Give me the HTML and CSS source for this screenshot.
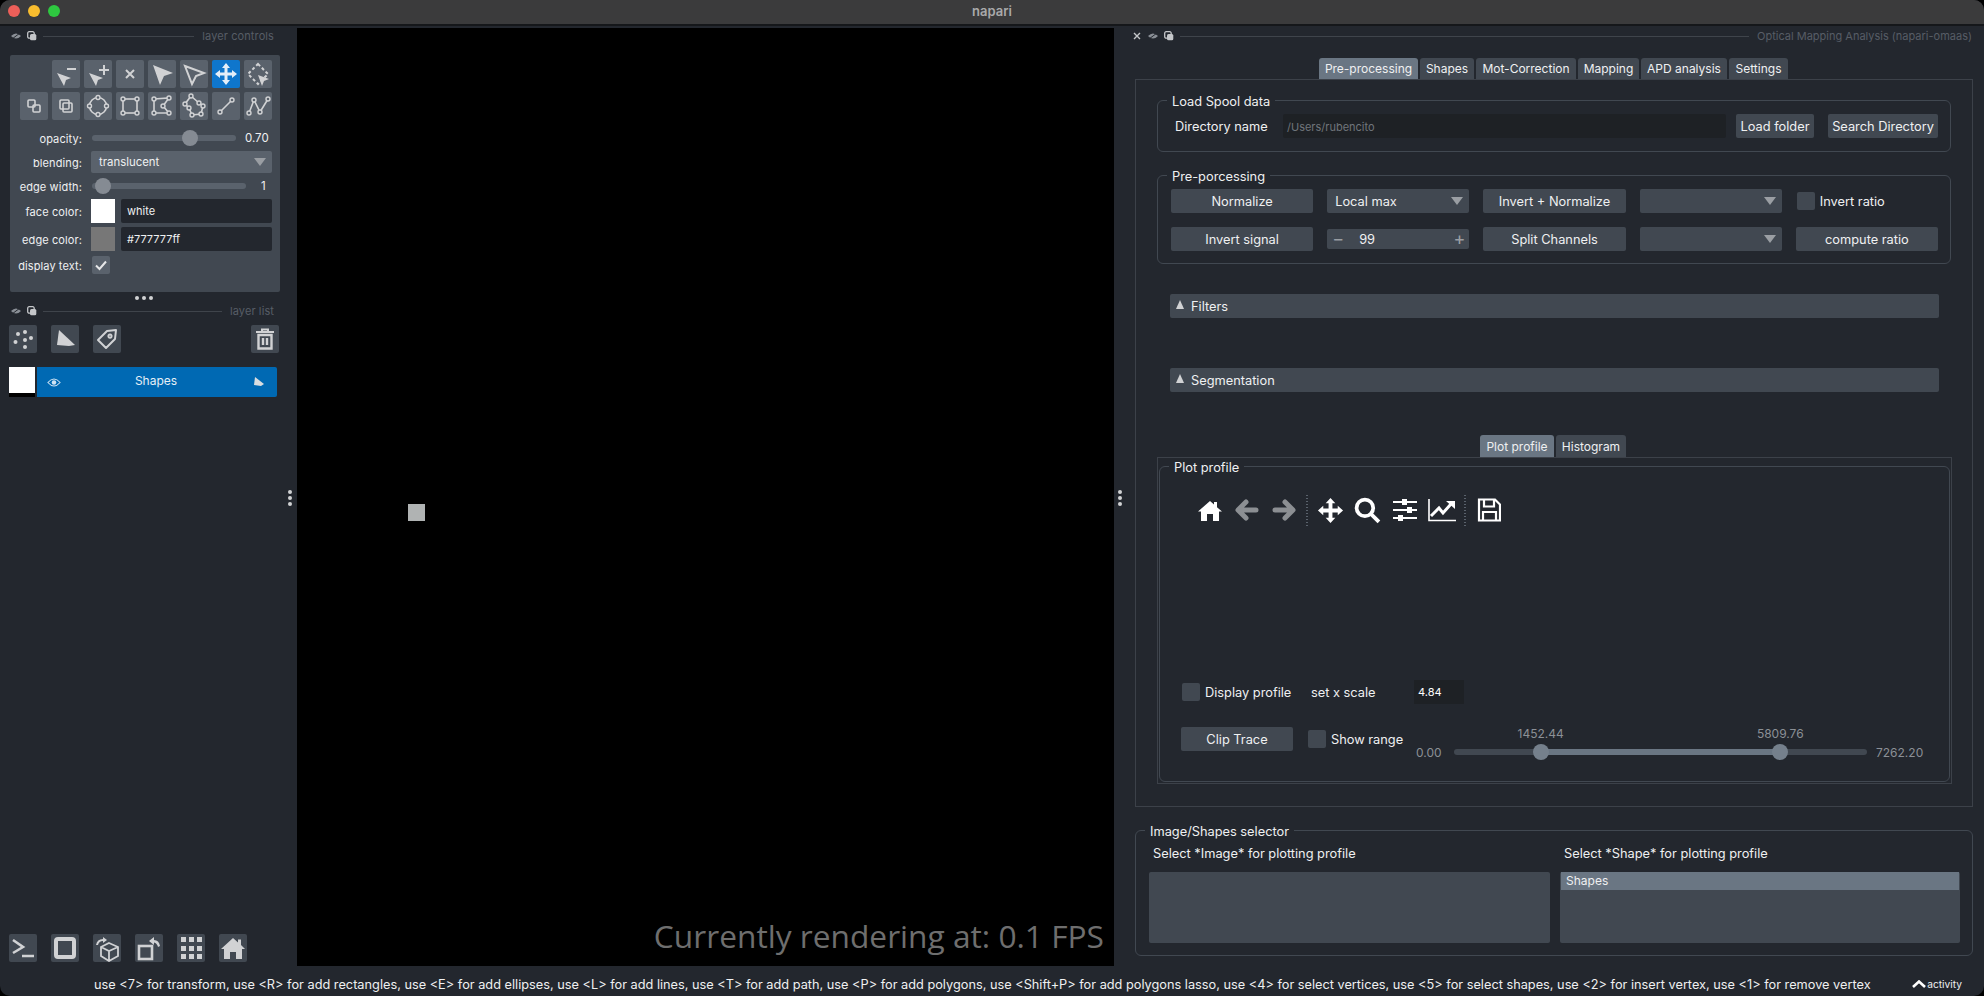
FILE: index.html
```html
<!DOCTYPE html>
<html>

<head>
    <meta charset="utf-8">
    <title>napari</title>
    <link rel="stylesheet" href="styles.css">
</head>

<body>
    <div class="window">
        <header class="titlebar">
            <div class="lights">
                <span class="light red"></span>
                <span class="light yellow"></span>
                <span class="light green"></span>
            </div>
            <span class="app-name">napari</span>
        </header>

        <main class="main">
            <!-- left dock -->
            <section class="left-dock">
                <div class="dock-title">
                    <svg class="dock-ico" viewBox="0 0 10 10"><path d="M0 5 Q5 0 10 5 Q5 10 0 5Z" fill="#8a8f96"/><path d="M1 8 L9 2" stroke="#23272e" stroke-width="1"/></svg>
                    <svg class="dock-ico float" viewBox="0 0 10 10"><rect x="0.7" y="0.7" width="6.5" height="6.5" rx="1.5" fill="none" stroke="#c4c6c9" stroke-width="1.3"/><rect x="3" y="3" width="6.3" height="6.3" rx="1.5" fill="#c4c6c9"/></svg>
                    <span class="dock-line"></span>
                    <span class="dock-label">layer controls</span>
                </div>

                <div class="controls">
                    <div class="mode-grid">
                        <button class="mode-btn start-2"><svg viewBox="0 0 28 28"><path d="M5 13 L19 18 L14 20 L12 26Z" class="ifill"/><path d="M15 9H24" class="istroke"/></svg></button>
                        <button class="mode-btn"><svg viewBox="0 0 28 28"><path d="M5 13 L19 18 L14 20 L12 26Z" class="ifill"/><path d="M15 10H25M20 5V15" class="istroke"/></svg></button>
                        <button class="mode-btn"><svg viewBox="0 0 28 28"><path d="M10 10L18 18M18 10L10 18" class="istroke"/></svg></button>
                        <button class="mode-btn"><svg viewBox="0 0 28 28"><path d="M5 5 L25 13 L16 16 L12 25Z" class="ifill"/></svg></button>
                        <button class="mode-btn"><svg viewBox="0 0 28 28"><path d="M5 6 L24 13 L16 16 L12 24Z" class="ioutline"/></svg></button>
                        <button class="mode-btn active"><svg viewBox="0 0 28 28"><path d="M14 3 L18 8 H15.5 V12.5 H20 V10 L25 14 L20 18 V15.5 H15.5 V20 H18 L14 25 L10 20 H12.5 V15.5 H8 V18 L3 14 L8 10 V12.5 H12.5 V8 H10Z" fill="#e4eef8"/></svg></button>
                        <button class="mode-btn"><svg viewBox="0 0 28 28"><path d="M14 4 L24 14 L14 24 L4 14Z" class="idash"/><path d="M14 15 L25 19 L20 21 L18 26Z" class="ifill"/></svg></button>

                        <button class="mode-btn"><svg viewBox="0 0 28 28"><rect x="8" y="8" width="7" height="7" rx="1" class="ithin"/><rect x="13" y="13" width="7" height="7" rx="1" class="ithin"/></svg></button>
                        <button class="mode-btn"><svg viewBox="0 0 28 28"><rect x="8" y="8" width="9" height="9" rx="1" class="ithin"/><rect x="11" y="11" width="9" height="9" rx="1" class="ithin"/></svg></button>
                        <button class="mode-btn"><svg viewBox="0 0 28 28"><circle cx="14" cy="14" r="8.5" class="ithin"/><circle cx="14" cy="5.5" r="2" class="ihandle"/><circle cx="14" cy="22.5" r="2" class="ihandle"/><circle cx="5.5" cy="14" r="2" class="ihandle"/><circle cx="22.5" cy="14" r="2" class="ihandle"/></svg></button>
                        <button class="mode-btn"><svg viewBox="0 0 28 28"><rect x="7" y="7" width="14" height="14" class="ithin"/><circle cx="7" cy="7" r="2" class="ihandle"/><circle cx="21" cy="7" r="2" class="ihandle"/><circle cx="7" cy="21" r="2" class="ihandle"/><circle cx="21" cy="21" r="2" class="ihandle"/></svg></button>
                        <button class="mode-btn"><svg viewBox="0 0 28 28"><path d="M6 7 L21 6 L15 14 L21 21 L6 21Z" class="ithin"/><circle cx="6" cy="7" r="2" class="ihandle"/><circle cx="21" cy="6" r="2" class="ihandle"/><circle cx="15" cy="14" r="2" class="ihandle"/><circle cx="21" cy="21" r="2" class="ihandle"/><circle cx="6" cy="21" r="2" class="ihandle"/></svg></button>
                        <button class="mode-btn"><svg viewBox="0 0 28 28"><path d="M11 4 L19 11 L23 14 L21 22 L12 23 L9 16 L5 12Z" class="ithin"/><circle cx="11" cy="4" r="2" class="ihandle"/><circle cx="19" cy="11" r="2" class="ihandle"/><circle cx="23" cy="14" r="2" class="ihandle"/><circle cx="21" cy="22" r="2" class="ihandle"/><circle cx="12" cy="23" r="2" class="ihandle"/><circle cx="9" cy="16" r="2" class="ihandle"/><circle cx="5" cy="12" r="2" class="ihandle"/></svg></button>
                        <button class="mode-btn"><svg viewBox="0 0 28 28"><path d="M8 20 L20 8" class="ithin"/><circle cx="8" cy="20" r="2" class="ihandle"/><circle cx="20" cy="8" r="2" class="ihandle"/></svg></button>
                        <button class="mode-btn"><svg viewBox="0 0 28 28"><path d="M5 21 L10 8 L16 20 L24 7" class="ithin"/><circle cx="5" cy="21" r="2" class="ihandle"/><circle cx="10" cy="8" r="2" class="ihandle"/><circle cx="16" cy="20" r="2" class="ihandle"/><circle cx="24" cy="7" r="2" class="ihandle"/></svg></button>
                    </div>

                    <div class="prop-rows">
                        <div class="prop-row">
                            <label class="prop-label">opacity:</label>
                            <div class="prop-slider">
                                <div class="track track-opacity"><span class="thumb" style="left: 68%"></span></div>
                                <span class="slider-value">0.70</span>
                            </div>
                        </div>
                        <div class="prop-row">
                            <label class="prop-label">blending:</label>
                            <div class="combo combo-sm">translucent<span class="caret"></span></div>
                        </div>
                        <div class="prop-row">
                            <label class="prop-label">edge width:</label>
                            <div class="prop-slider">
                                <div class="track track-edge"><span class="thumb" style="left: 7%"></span></div>
                                <span class="slider-value value-narrow">1</span>
                            </div>
                        </div>
                        <div class="prop-row tall">
                            <label class="prop-label">face color:</label>
                            <div class="color-field">
                                <span class="swatch white"></span>
                                <span class="color-input">white</span>
                            </div>
                        </div>
                        <div class="prop-row tall gap-4">
                            <label class="prop-label">edge color:</label>
                            <div class="color-field">
                                <span class="swatch grey"></span>
                                <span class="color-input">#777777ff</span>
                            </div>
                        </div>
                        <div class="prop-row check-row">
                            <label class="prop-label">display text:</label>
                            <span class="check checked"><svg viewBox="0 0 18 18"><path d="M4 9.5 L7.5 13 L14 5.5" fill="none" stroke="#e6e7e8" stroke-width="2"/></svg></span>
                        </div>
                    </div>
                </div>

                <div class="h-handle"><span></span><span></span><span></span></div>

                <div class="dock-title list-title">
                    <svg class="dock-ico" viewBox="0 0 10 10"><path d="M0 5 Q5 0 10 5 Q5 10 0 5Z" fill="#8a8f96"/><path d="M1 8 L9 2" stroke="#23272e" stroke-width="1"/></svg>
                    <svg class="dock-ico float" viewBox="0 0 10 10"><rect x="0.7" y="0.7" width="6.5" height="6.5" rx="1.5" fill="none" stroke="#c4c6c9" stroke-width="1.3"/><rect x="3" y="3" width="6.3" height="6.3" rx="1.5" fill="#c4c6c9"/></svg>
                    <span class="dock-line"></span>
                    <span class="dock-label">layer list</span>
                </div>

                <div class="layer-btns">
                    <button class="mode-btn"><svg viewBox="0 0 28 28"><g fill="#d1d2d4"><circle cx="6.5" cy="17" r="2"/><circle cx="9" cy="9" r="2"/><circle cx="16" cy="7" r="2"/><circle cx="16" cy="15" r="2"/><circle cx="22" cy="13" r="2"/><circle cx="16" cy="22" r="2"/></g></svg></button>
                    <button class="mode-btn"><svg viewBox="0 0 28 28"><path d="M8 5 L24 20 L18 21 L6 20Z" fill="#d1d2d4"/></svg></button>
                    <button class="mode-btn"><svg viewBox="0 0 28 28"><path d="M5 15 L14 6 L23 5 L22 14 L13 23Z M17 9.5 a1.6 1.6 0 1 0 0.01 0Z" fill="none" stroke="#d1d2d4" stroke-width="2" stroke-linejoin="round"/></svg></button>
                    <button class="mode-btn push"><svg viewBox="0 0 28 28"><path d="M5 7H23M11 7V4.5H17V7" fill="none" stroke="#d1d2d4" stroke-width="2"/><path d="M7.5 10H20.5V23.5H7.5Z" fill="none" stroke="#d1d2d4" stroke-width="2.4"/><path d="M12 13V20M16 13V20" stroke="#d1d2d4" stroke-width="2.4"/></svg></button>
                </div>

                <div class="layer-row">
                    <span class="layer-thumb"></span>
                    <div class="layer-item">
                        <svg class="layer-eye" viewBox="0 0 16 12"><path d="M1 6 Q8 -2 15 6 Q8 14 1 6Z" fill="none" stroke="#cfe3f3" stroke-width="1.2"/><circle cx="8" cy="6" r="2.6" fill="#cfe3f3"/></svg>
                        <span class="layer-name">Shapes</span>
                        <svg class="layer-type" viewBox="0 0 12 12"><path d="M2 1 L11 8 L8 10 L1 9Z" fill="#d9dde0"/></svg>
                    </div>
                </div>

                <div class="viewer-btns">
                    <button class="mode-btn"><svg viewBox="0 0 28 28"><path d="M4 6 L14 13 L4 19" fill="none" stroke="#d1d2d4" stroke-width="2.6"/><path d="M13 22H25" stroke="#d1d2d4" stroke-width="2.6"/></svg></button>
                    <button class="mode-btn"><svg viewBox="0 0 28 28"><rect x="5" y="5" width="18" height="18" rx="2" fill="none" stroke="#d1d2d4" stroke-width="4"/></svg></button>
                    <button class="mode-btn"><svg viewBox="0 0 28 28"><path d="M16 9 L25 13 L25 22 L16 27 L8 22 L8 13Z M8 13 L16 17 L25 13 M16 17V27" fill="none" stroke="#d1d2d4" stroke-width="1.8"/><path d="M3 11 Q4 5 10 5 V3 L14 6 L10 9 V7 Q6 7 5 11Z" fill="#d1d2d4"/></svg></button>
                    <button class="mode-btn"><svg viewBox="0 0 28 28"><rect x="4" y="12" width="13" height="13" fill="none" stroke="#d1d2d4" stroke-width="2.6"/><path d="M25 12 Q24 6 19 6 V3 L14 7 L19 11 V8.5 Q22 9 23 13Z" fill="#d1d2d4"/></svg></button>
                    <button class="mode-btn"><svg viewBox="0 0 28 28"><g fill="#d1d2d4"><rect x="4" y="3" width="5" height="5"/><rect x="12" y="3" width="5" height="5"/><rect x="20" y="3" width="5" height="5"/><rect x="4" y="12" width="5" height="5"/><rect x="12" y="12" width="5" height="5"/><rect x="20" y="12" width="5" height="5"/><rect x="4" y="20" width="5" height="5"/><rect x="12" y="20" width="5" height="5"/><rect x="20" y="20" width="5" height="5"/></g></svg></button>
                    <button class="mode-btn"><svg viewBox="0 0 28 28"><path d="M14 4 L19 8.5 V5.5 H22 V11 L26 15 H23 V25 H17 V18 H11 V25 H5 V15 H2Z" fill="#d1d2d4"/></svg></button>
                </div>

                <div class="v-handle left-handle"><span></span><span></span><span></span></div>
            </section>

            <!-- canvas -->
            <section class="canvas">
                <span class="canvas-shape"></span>
                <span class="fps">Currently rendering at: 0.1 FPS</span>
            </section>

            <!-- plugin dock -->
            <section class="right-dock">
                <div class="v-handle right-handle"><span></span><span></span><span></span></div>

                <div class="dock-title plugin-title">
                    <svg class="dock-ico close" viewBox="0 0 10 10"><path d="M2 2L8 8M8 2L2 8" stroke="#c4c6c9" stroke-width="1.4"/></svg>
                    <svg class="dock-ico" viewBox="0 0 10 10"><path d="M0 5 Q5 0 10 5 Q5 10 0 5Z" fill="#8a8f96"/><path d="M1 8 L9 2" stroke="#23272e" stroke-width="1"/></svg>
                    <svg class="dock-ico float" viewBox="0 0 10 10"><rect x="0.7" y="0.7" width="6.5" height="6.5" rx="1.5" fill="none" stroke="#c4c6c9" stroke-width="1.3"/><rect x="3" y="3" width="6.3" height="6.3" rx="1.5" fill="#c4c6c9"/></svg>
                    <span class="dock-line"></span>
                    <span class="dock-label plugin-label">Optical Mapping Analysis (napari-omaas)</span>
                </div>

                <nav class="tabs main-tabs">
                    <a class="tab selected t-pre">Pre-processing</a>
                    <a class="tab t-shapes">Shapes</a>
                    <a class="tab t-mot">Mot-Correction</a>
                    <a class="tab t-map">Mapping</a>
                    <a class="tab t-apd">APD analysis</a>
                    <a class="tab t-set">Settings</a>
                </nav>

                <div class="pane">
                    <div class="group spool">
                        <span class="group-title">Load Spool data</span>
                        <label class="dir-label">Directory name</label>
                        <span class="dir-input">/Users/rubencito</span>
                        <button class="btn load">Load folder</button>
                        <button class="btn search">Search Directory</button>
                    </div>

                    <div class="group prep">
                        <span class="group-title">Pre-porcessing</span>
                        <button class="btn">Normalize</button>
                        <div class="combo">Local max<span class="caret"></span></div>
                        <button class="btn">Invert + Normalize</button>
                        <div class="combo"><span class="caret"></span></div>
                        <div class="check-item invert"><span class="check"></span><span>Invert ratio</span></div>
                        <button class="btn">Invert signal</button>
                        <div class="spin"><span class="spin-sign">−</span><span class="spin-value">99</span><span class="spin-sign plus">+</span></div>
                        <button class="btn">Split Channels</button>
                        <div class="combo"><span class="caret"></span></div>
                        <button class="btn">compute ratio</button>
                    </div>

                    <div class="collapse filters"><span class="arrow"></span>Filters</div>
                    <div class="collapse segmentation"><span class="arrow"></span>Segmentation</div>

                    <nav class="tabs plot-tabs">
                        <a class="tab selected t-plot">Plot profile</a>
                        <a class="tab t-hist">Histogram</a>
                    </nav>

                    <div class="plot-pane">
                        <div class="group plot-group">
                            <span class="group-title">Plot profile</span>

                            <div class="toolbar">
                                <span class="tool"><svg viewBox="0 0 24 24"><path d="M12 3 L16 6.5 V4 H19 V9.3 L24 13.5 H21 V23 H15 V16 H9 V23 H3 V13.5 H0Z" fill="#fff"/></svg></span>
                                <span class="tool"><svg viewBox="0 0 24 24"><path d="M11 4 L3 12 L11 20 M4 12 H21" fill="none" stroke="#8c8f93" stroke-width="5" stroke-linecap="round" stroke-linejoin="round"/></svg></span>
                                <span class="tool"><svg viewBox="0 0 24 24"><path d="M13 4 L21 12 L13 20 M20 12 H3" fill="none" stroke="#8c8f93" stroke-width="5" stroke-linecap="round" stroke-linejoin="round"/></svg></span>
                                <span class="tool-sep"></span>
                                <span class="tool large"><svg viewBox="0 0 28 28"><path d="M14 1 L19 6.5 H16 V12 H21.5 V9 L27 14 L21.5 19 V16 H16 V21.5 H19 L14 27 L9 21.5 H12 V16 H6.5 V19 L1 14 L6.5 9 V12 H12 V6.5 H9Z" fill="#fff"/></svg></span>
                                <span class="tool large"><svg viewBox="0 0 26 26"><circle cx="10.5" cy="10.5" r="8" fill="none" stroke="#fff" stroke-width="3.6"/><path d="M16.5 16.5 L24 24" stroke="#fff" stroke-width="3.6"/></svg></span>
                                <span class="tool"><svg viewBox="0 0 24 24"><g stroke="#fff" stroke-width="2"><path d="M0 4H24M0 12H24M0 20H24"/></g><g fill="#fff"><rect x="9" y="1" width="5" height="6"/><rect x="14" y="9" width="5" height="6"/><rect x="5" y="17" width="5" height="6"/></g></svg></span>
                                <span class="tool wide"><svg viewBox="0 0 28 24"><path d="M1 1V22.5H28" fill="none" stroke="#fff" stroke-width="1.6"/><path d="M3 18 L11 10 L15 15 L23 6" fill="none" stroke="#fff" stroke-width="3"/><path d="M18 3 H27 V11Z" fill="#fff"/></svg></span>
                                <span class="tool-sep"></span>
                                <span class="tool"><svg viewBox="0 0 24 24"><path d="M2 1.5 H18 L23 6.5 V22.5 H2Z" fill="none" stroke="#fff" stroke-width="2.2"/><path d="M7 2 V8.5 H17 V2" fill="none" stroke="#fff" stroke-width="2.2"/><path d="M6 22 V14 H19 V22" fill="none" stroke="#fff" stroke-width="2.2"/></svg></span>
                            </div>

                            <div class="plot-area"></div>

                            <div class="plot-row">
                                <span class="check"></span>
                                <span class="plot-text display-label">Display profile</span>
                                <span class="plot-text scale-label">set x scale</span>
                                <span class="scale-input">4.84</span>
                            </div>

                            <div class="plot-row clip-row">
                                <button class="btn clip">Clip Trace</button>
                                <span class="check"></span>
                                <span class="plot-text range-label">Show range</span>
                                <div class="range">
                                    <span class="range-end">0.00</span>
                                    <div class="range-track">
                                        <span class="range-fill" style="left: 21%; width: 58%"></span>
                                        <span class="thumb" style="left: 21%"><em>1452.44</em></span>
                                        <span class="thumb" style="left: 79%"><em>5809.76</em></span>
                                    </div>
                                    <span class="range-end">7262.20</span>
                                </div>
                            </div>
                        </div>
                    </div>
                </div>

                <div class="group selector">
                    <span class="group-title">Image/Shapes selector</span>
                    <div class="selector-col">
                        <label class="selector-label">Select *Image* for plotting profile</label>
                        <div class="list"></div>
                    </div>
                    <div class="selector-col">
                        <label class="selector-label">Select *Shape* for plotting profile</label>
                        <div class="list"><div class="list-item">Shapes</div></div>
                    </div>
                </div>
            </section>
        </main>

        <footer class="statusbar">
            <span class="status-text">use &lt;7&gt; for transform, use &lt;R&gt; for add rectangles, use &lt;E&gt; for add ellipses, use &lt;L&gt; for add lines, use &lt;T&gt; for add path, use &lt;P&gt; for add polygons, use &lt;Shift+P&gt; for add polygons lasso, use &lt;4&gt; for select vertices, use &lt;5&gt; for select shapes, use &lt;2&gt; for insert vertex, use &lt;1&gt; for remove vertex</span>
            <span class="activity"><svg viewBox="0 0 14 8"><path d="M1 7 L7 1.5 L13 7" fill="none" stroke="#fff" stroke-width="2.6"/></svg>activity</span>
        </footer>
    </div>
</body>

</html>
```

FILE: styles.css
```css
* {
    box-sizing: border-box;
}

html,
body {
    margin: 0;
    height: 100%;
    background: #000;
}

body {
    font-family: Inter, "Liberation Sans", sans-serif;
    font-size: 12.8px;
    color: #eff0f1;
    overflow: hidden;
}

button {
    font: inherit;
    color: inherit;
    border: none;
    padding: 0;
}

.window {
    width: 1984px;
    height: 996px;
    display: flex;
    flex-direction: column;
    background: #23272e;
    border-radius: 10px;
    overflow: hidden;
}

/* title bar */
.titlebar {
    position: relative;
    height: 26px;
    flex: none;
    background: #3b3b3c;
    border-bottom: 2px solid #15171a;
    display: flex;
    align-items: center;
    justify-content: center;
}

.lights {
    position: absolute;
    left: 8px;
    top: 5px;
    display: flex;
    gap: 8px;
}

.light {
    width: 12px;
    height: 12px;
    border-radius: 50%;
}

.red { background: #ed5f59; }
.yellow { background: #f9bd2e; }
.green { background: #2ec840; }

.app-name {
    font-size: 13px;
    font-weight: 600;
    color: #a9a9aa;
    margin-top: -2px;
}

.main {
    flex: none;
    height: 940px;
    display: flex;
}

/* left dock */
.left-dock {
    position: relative;
    width: 297px;
    flex: none;
    display: flex;
    flex-direction: column;
}

.dock-title {
    height: 20px;
    flex: none;
    display: flex;
    align-items: center;
    padding-left: 11px;
    padding-right: 23px;
}

.dock-ico {
    width: 10px;
    height: 10px;
    flex: none;
}

.dock-ico.float {
    margin-left: 6px;
}

.dock-line {
    flex: 1;
    height: 1px;
    background: #3f444b;
    margin: 0 8px 0 6px;
}

.dock-label {
    font-size: 11px;
    letter-spacing: 0.1px;
    color: #575d66;
    white-space: nowrap;
}

.dock-label.plugin-label {
    letter-spacing: 0;
}

.controls {
    margin: 9px 0 0 10px;
    width: 270px;
    height: 237px;
    background: #414851;
    border-radius: 2px;
    padding: 5px 8px 0 10px;
}

.mode-grid {
    display: grid;
    grid-template-columns: repeat(8, 28px);
    grid-auto-rows: 28px;
    gap: 4px;
}

.mode-btn {
    width: 28px;
    height: 28px;
    flex: none;
    background: #5a626c;
    border-radius: 2px;
    display: block;
}

.mode-btn svg {
    display: block;
    width: 28px;
    height: 28px;
}

.start-2 { grid-column-start: 2; }
.mode-btn.active { background: #0f76cc; }

.ifill { fill: #d1d2d4; }
.istroke { fill: none; stroke: #d1d2d4; stroke-width: 2; }
.ioutline { fill: none; stroke: #d1d2d4; stroke-width: 2; }
.idash { fill: none; stroke: #d1d2d4; stroke-width: 2; stroke-dasharray: 3 2.4; }
.ithin { fill: none; stroke: #d1d2d4; stroke-width: 1.6; }
.ihandle { fill: #5a626c; stroke: #d1d2d4; stroke-width: 1.4; }

.prop-rows {
    margin: 7px 0 0 -10px;
    display: flex;
    flex-direction: column;
    gap: 2px;
}

.prop-row {
    height: 22px;
    display: flex;
    align-items: center;
}

.prop-row.tall { height: 24px; }
.prop-row.gap-4 { margin-top: 2px; }
.prop-row.check-row { height: 18px; margin-top: 3px; }

.prop-label {
    width: 72px;
    margin-right: 9px;
    text-align: right;
    font-size: 11px;
    letter-spacing: 0.1px;
    line-height: 16px;
    padding-top: 1px;
    flex: none;
}

.prop-slider {
    width: 181px;
    display: flex;
    align-items: center;
    padding-left: 1px;
}

.track {
    position: relative;
    height: 6px;
    background: #5a626c;
    border-radius: 3px;
    flex: none;
}

.track-opacity { width: 144px; }
.track-edge { width: 154px; }

.thumb {
    position: absolute;
    top: 50%;
    width: 16px;
    height: 16px;
    border-radius: 50%;
    background: #858b93;
    transform: translate(-50%, -50%);
}

.slider-value {
    margin-left: 9px;
    font-size: 11.5px;
    white-space: nowrap;
}

.slider-value.value-narrow {
    margin-left: 15px;
}

.combo {
    position: relative;
    background: #414851;
    border-radius: 2px;
    padding-left: 8px;
    display: flex;
    align-items: center;
}

.combo-sm {
    width: 181px;
    height: 22px;
    background: #5a626c;
    font-size: 11.4px;
}

.caret {
    position: absolute;
    right: 6px;
    top: 50%;
    margin-top: -4px;
    width: 0;
    height: 0;
    border-left: 6.5px solid transparent;
    border-right: 6.5px solid transparent;
    border-top: 8px solid #9a9ea3;
}

.color-field {
    width: 181px;
    display: flex;
    gap: 6px;
}

.swatch {
    width: 24px;
    height: 24px;
    flex: none;
}

.swatch.white { background: #fff; }
.swatch.grey { background: #777; }

.color-input {
    flex: 1;
    height: 24px;
    background: #23272e;
    border-radius: 2px;
    padding-left: 6px;
    font-size: 11px;
    line-height: 25px;
}

.check {
    display: block;
    width: 18px;
    height: 18px;
    background: #414851;
    border-radius: 2px;
    flex: none;
}

.check.checked {
    background: #5a626c;
    margin-left: 1px;
}

.check svg {
    display: block;
}

.h-handle {
    height: 9px;
    flex: none;
    display: flex;
    justify-content: center;
    gap: 3px;
    padding: 4px 9px 0 0;
}

.h-handle span,
.v-handle span {
    display: block;
    width: 4px;
    height: 4px;
    border-radius: 50%;
    background: #d1d2d4;
}

.v-handle {
    position: absolute;
    top: 464px;
    display: flex;
    flex-direction: column;
    gap: 2px;
}

.left-handle { right: 5px; }
.right-handle { left: 4px; }

.layer-btns {
    margin-top: 4px;
    padding: 0 18px 0 9px;
    display: flex;
    gap: 14px;
}

.mode-btn.push {
    margin-left: auto;
}

.layer-btns .mode-btn,
.viewer-btns .mode-btn {
    background: #414851;
}

.layer-row {
    margin: 14px 20px 0 9px;
    display: flex;
    gap: 2px;
}

.layer-thumb {
    width: 26px;
    height: 30px;
    background: #fff;
    border-bottom: 4px solid #000;
    flex: none;
}

.layer-item {
    flex: 1;
    height: 30px;
    background: #0069b3;
    border-radius: 0 2px 2px 0;
    display: flex;
    align-items: center;
    padding: 0 12px 0 10px;
}

.layer-eye {
    width: 14px;
    height: 11px;
}

.layer-name {
    flex: 1;
    text-align: center;
    font-size: 12px;
    line-height: 14px;
    padding: 0 2px 2px 0;
    color: #e6eff6;
}

.layer-type {
    width: 12px;
    height: 12px;
}

.viewer-btns {
    margin-top: auto;
    padding: 0 0 4px 9px;
    display: flex;
    gap: 14px;
}

/* canvas */
.canvas {
    position: relative;
    width: 817px;
    flex: none;
    margin-top: 2px;
    background: #000;
}

.canvas-shape {
    position: absolute;
    left: 111px;
    top: 476px;
    width: 17px;
    height: 17px;
    background: #b0b3b3;
}

.fps {
    position: absolute;
    right: 10px;
    bottom: 9px;
    font-family: "Open Sans", sans-serif;
    font-size: 31.7px;
    color: #6e6e6e;
    white-space: nowrap;
}

/* plugin dock */
.right-dock {
    position: relative;
    width: 870px;
    flex: none;
}

.plugin-title {
    padding-left: 18px;
    padding-right: 12px;
}

.dock-ico.close {
    margin-right: 6px;
}

.main-tabs {
    margin: 12px 0 0 205px;
}

.tabs {
    height: 21px;
    display: flex;
    gap: 2px;
}

.tab {
    height: 21px;
    background: #414851;
    border-radius: 3px 3px 0 0;
    display: flex;
    align-items: center;
    justify-content: center;
    font-size: 12px;
    white-space: nowrap;
}

.tab.selected { background: #6a7683; }

.t-pre { width: 99px; }
.t-shapes { width: 54px; }
.t-mot { width: 100px; }
.t-map { width: 61px; }
.t-apd { width: 86px; }
.t-set { width: 59px; }
.t-plot { width: 74px; }
.t-hist { width: 70px; }

.pane {
    margin-left: 21px;
    width: 838px;
    height: 728px;
    border: 1px solid #3c4149;
    padding: 20px 21px 0;
}

.group {
    position: relative;
    border: 1px solid #414851;
    border-radius: 6px;
}

.group-title {
    position: absolute;
    top: -7px;
    left: 9px;
    padding: 0 5px;
    background: #23272e;
    line-height: 16px;
}

.spool {
    height: 52px;
    padding: 13px 12px 0 17px;
    display: flex;
}

.dir-label {
    width: 108px;
    line-height: 25px;
    flex: none;
}

.dir-input {
    width: 443px;
    height: 24px;
    background: #1e2125;
    border-radius: 2px;
    padding-left: 4px;
    font-size: 11px;
    line-height: 26px;
    color: #70757b;
    flex: none;
}

.btn {
    height: 24px;
    background: #414851;
    border-radius: 2px;
    display: block;
    white-space: nowrap;
}

.btn.load {
    width: 78px;
    margin-left: 10px;
}

.btn.search {
    width: 110px;
    margin-left: 14px;
}

.prep {
    margin-top: 23px;
    height: 89px;
    padding: 13px 12px 0 13px;
    display: grid;
    grid-template-columns: repeat(5, 1fr);
    grid-template-rows: 24px 24px;
    gap: 14px;
}

.check-item {
    display: flex;
    align-items: center;
    gap: 5px;
}

.invert {
    margin-left: 1px;
}

.spin {
    height: 20px;
    align-self: center;
    background: #414851;
    border-radius: 2px;
    display: flex;
    align-items: center;
    padding: 0 4px 0 5px;
}

.spin-sign {
    font-size: 18px;
    line-height: 20px;
    width: 12px;
    color: #9a9ea3;
    text-align: center;
}

.spin-value {
    margin-left: 15px;
    flex: 1;
}

.collapse {
    margin-left: 13px;
    width: 769px;
    height: 24px;
    background: #414851;
    border-radius: 2px;
    display: flex;
    align-items: center;
    padding-left: 6px;
}

.filters { margin-top: 30px; }
.segmentation { margin-top: 50px; }

.arrow {
    width: 0;
    height: 0;
    margin: -3px 7px 0 0;
    border-left: 4.5px solid transparent;
    border-right: 4.5px solid transparent;
    border-bottom: 9px solid #d1d2d4;
}

.plot-tabs {
    margin: 43px 0 0 323px;
    height: 22px;
}

.plot-tabs .tab { height: 22px; }

.plot-pane {
    width: 795px;
    height: 327px;
    border: 1px solid #3c4149;
    padding: 8px 1px 0;
}

.plot-group {
    height: 316px;
}

.toolbar {
    margin-top: 31px;
    padding-left: 31px;
    height: 24px;
    display: flex;
}

.tool {
    width: 37px;
    height: 24px;
    flex: none;
    display: flex;
    justify-content: center;
}

.tool svg {
    width: 24px;
    height: 24px;
    flex: none;
    display: block;
}

.tool.wide svg {
    width: 28px;
}

.tool.large svg {
    width: 27px;
    height: 27px;
    margin-top: -1px;
}

.tool-sep {
    width: 10px;
    flex: none;
    background: radial-gradient(circle, #5a626c 0.6px, transparent 0.8px) center -6px / 10px 3px repeat-y;
    margin-top: -4px;
    height: 32px;
}

.plot-area {
    height: 158px;
}

.plot-row {
    display: flex;
    align-items: center;
    height: 24px;
    padding-left: 22px;
}

.plot-text {
    margin-left: 5px;
    white-space: nowrap;
}

.display-label { width: 86px; }

.scale-label {
    margin-left: 20px;
    width: 64px;
}

.scale-input {
    margin-left: 39px;
    width: 50px;
    height: 24px;
    background: #1e2125;
    padding-left: 4px;
    font-size: 11px;
    line-height: 25px;
    color: #fff;
}

.clip-row {
    margin-top: 23px;
    align-items: flex-start;
    padding-left: 21px;
}

.btn.clip {
    width: 112px;
}

.clip-row .check {
    margin: 3px 0 0 15px;
}

.range-label {
    width: 71px;
    line-height: 25px;
}

.range {
    margin: 18px 0 0 14px;
    width: 507px;
    display: flex;
    align-items: center;
    height: 14px;
}

.range-end {
    font-size: 12px;
    color: #8b9096;
    white-space: nowrap;
}

.range-end:first-child {
    width: 38px;
    flex: none;
}

.range-track {
    position: relative;
    width: 413px;
    height: 6px;
    margin-right: 9px;
    flex: none;
    background: #414851;
    border-radius: 3px;
}

.range-fill {
    position: absolute;
    top: 0;
    bottom: 0;
    background: #6a7683;
}

.range-track .thumb {
    background: #75808c;
}

.thumb em {
    position: absolute;
    bottom: 19px;
    left: 50%;
    transform: translateX(-50%);
    font-style: normal;
    font-size: 12px;
    color: #8b9096;
}

.selector {
    margin: 23px 0 0 21px;
    width: 838px;
    height: 126px;
    padding: 15px 12px 0 13px;
    display: grid;
    grid-template-columns: 401px 400px;
    column-gap: 10px;
}

.selector-label {
    display: block;
    height: 14px;
    line-height: 16px;
    padding-left: 4px;
}

.list {
    margin-top: 12px;
    height: 71px;
    background: #414851;
    border-radius: 2px;
    padding: 0 1px;
}

.list-item {
    height: 18px;
    background: #6a7683;
    padding-left: 5px;
    font-size: 12px;
    line-height: 18px;
}

/* status bar */
.statusbar {
    flex: 1;
    display: flex;
    align-items: center;
    padding: 6px 22px 0 94px;
}

.status-text {
    font-size: 12.75px;
    white-space: nowrap;
}

.activity {
    margin-left: auto;
    display: flex;
    align-items: center;
    gap: 1px;
    font-size: 10.2px;
}

.activity svg {
    width: 14px;
    height: 8px;
}
```
